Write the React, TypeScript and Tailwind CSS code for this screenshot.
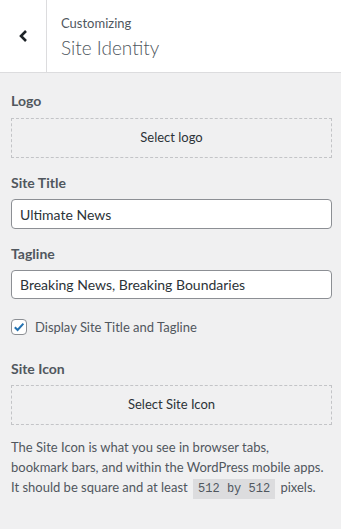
import React from "react";

export default function App() {
  const font = { fontFamily: 'Lato, "Noto Sans", sans-serif' };
  return (
    <div className="w-[341px] h-[529px] bg-[#f0f0f1] text-[#50575e] overflow-hidden" style={font}>
      <div className="flex h-[73px] bg-white border-b border-[#dcdcde]">
        <div className="w-[47px] border-r border-[#dcdcde] flex items-center justify-center">
          <svg width="14" height="14" viewBox="0 0 14 14" className="ml-[2px]">
            <path d="M9 2 L4 7 L9 12" fill="none" stroke="#1d2327" strokeWidth="2.6" />
          </svg>
        </div>
        <div className="flex flex-col pl-[14px] pt-[14px]">
          <span className="text-[13px] leading-[18px] text-[#50575e]">Customizing</span>
          <span className="text-[19px] leading-[28px] font-light text-[#50575e] mt-[2px]">Site Identity</span>
        </div>
      </div>
      <div className="pl-[11px] pr-[9px] pt-[19px] flex flex-col">
        <label className="text-[14px] font-bold leading-[18px] text-[#50575e]">Logo</label>
        <div className="mt-[8px] h-[40px] border border-dashed border-[#c3c4c7] flex items-center justify-center text-[13px] text-[#2c3338]">
          Select logo
        </div>
        <label className="mt-[16px] text-[14px] font-bold leading-[18px]">Site Title</label>
        <div className="mt-[7px] h-[30px] bg-white border border-[#8c8f94] rounded-[4px] flex items-center px-[8px] text-[14px] text-[#2c3338]">
          Ultimate News
        </div>
        <label className="mt-[16px] text-[14px] font-bold leading-[18px]">Tagline</label>
        <div className="mt-[7px] h-[29px] bg-white border border-[#8c8f94] rounded-[4px] flex items-center px-[8px] text-[14px] text-[#2c3338]">
          Breaking News, Breaking Boundaries
        </div>
        <div className="mt-[19px] flex items-center">
          <div className="w-[16px] h-[16px] bg-white border border-[#8c8f94] rounded-[4px] flex items-center justify-center">
            <svg width="14" height="14" viewBox="0 0 14 14">
              <path d="M2.8 7.2 L5.6 10 L11.4 3.6" fill="none" stroke="#2271b1" strokeWidth="2" />
            </svg>
          </div>
          <span className="ml-[8px] text-[13px] leading-[18px] text-[#50575e]">Display Site Title and Tagline</span>
        </div>
        <label className="mt-[24px] text-[14px] font-bold leading-[18px]">Site Icon</label>
        <div className="mt-[7px] h-[40px] border border-dashed border-[#c3c4c7] flex items-center justify-center text-[13px] text-[#2c3338]">
          Select Site Icon
        </div>
        <p className="mt-[12px] text-[13px] leading-[20px] text-[#50575e]">
          The Site Icon is what you see in browser tabs,
          <br />
          bookmark bars, and within the WordPress mobile apps.
          <br />
          It should be square and at least{" "}
          <code className="bg-[#dcdcde] px-[5px] py-[3px] text-[12px] mx-[2px]" style={{ fontFamily: '"Liberation Mono", monospace' }}>512 by 512</code>{" "}
          pixels.
        </p>
      </div>
    </div>
  );
}
